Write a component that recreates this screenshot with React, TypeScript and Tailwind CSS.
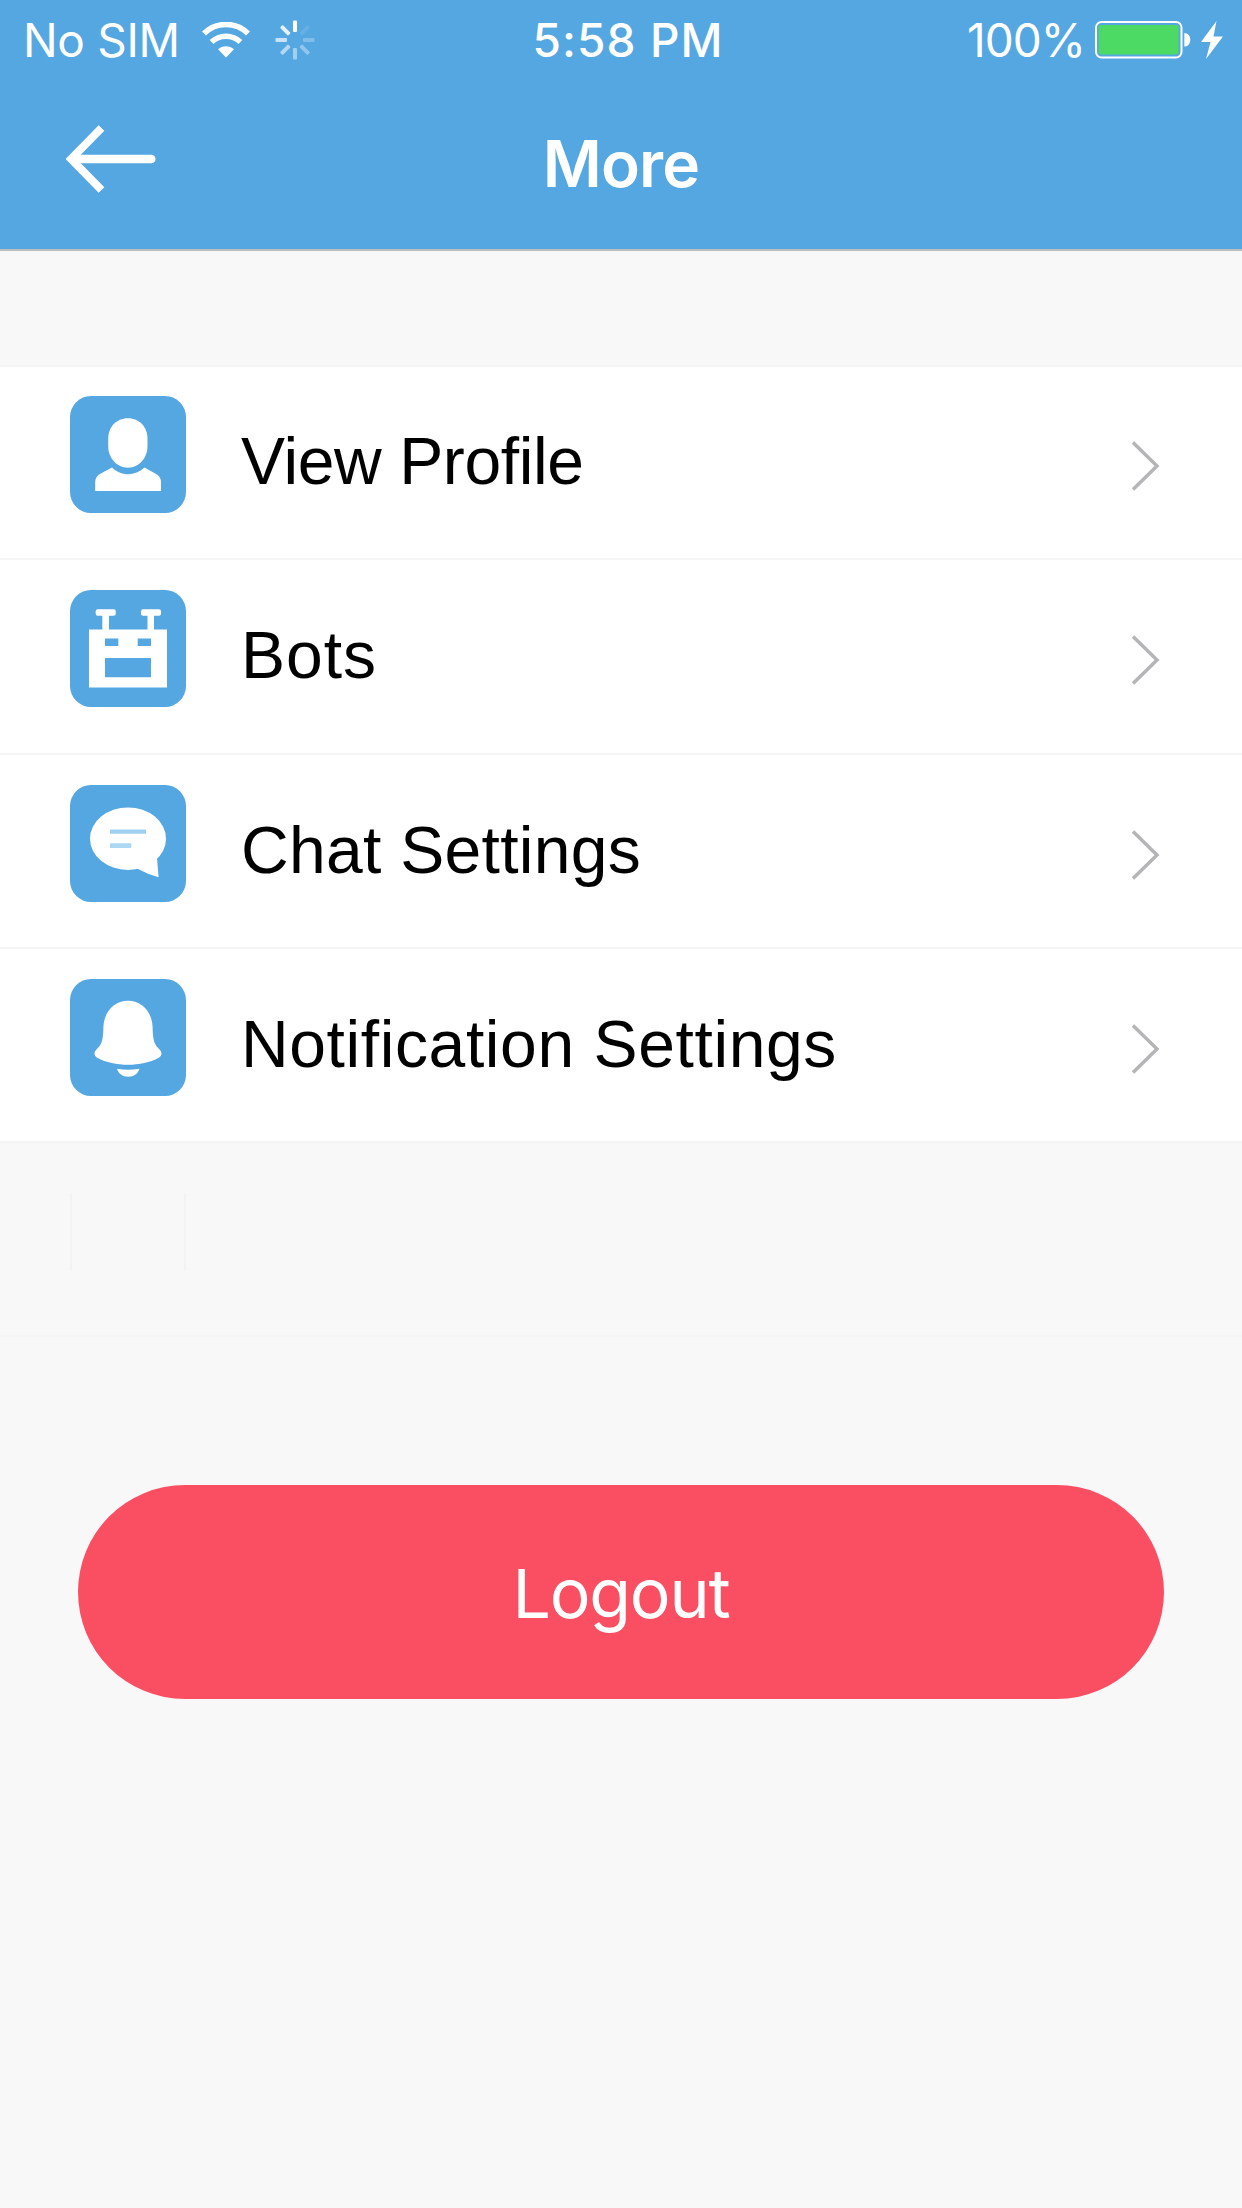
import type { ReactNode } from 'react'
import { clsx } from 'clsx'

const UI_FONT = "font-['Inter','Liberation_Sans',sans-serif]"
const LIST_FONT = "font-['Liberation_Sans',Arial,sans-serif]"

function WifiIcon() {
  return (
    <svg width="48" height="36" viewBox="0 0 48 36" fill="none" aria-hidden="true">
      <path d="M2 11.5C14 -0.6 34 -0.6 46 11.5" stroke="white" strokeWidth="5.5" />
      <path d="M9.6 20C17.5 12.2 30.5 12.2 38.4 20" stroke="white" strokeWidth="5.5" />
      <path d="M24 35.5L16 27.3C20.5 23.3 27.5 23.3 32 27.3Z" fill="white" />
    </svg>
  )
}

const spokes = [
  { angle: 0, opacity: 1 },
  { angle: 45, opacity: 0.1 },
  { angle: 90, opacity: 0.26 },
  { angle: 135, opacity: 0.36 },
  { angle: 180, opacity: 0.46 },
  { angle: 225, opacity: 0.56 },
  { angle: 270, opacity: 0.68 },
  { angle: 315, opacity: 0.85 },
]

function Spinner() {
  return (
    <svg width="40" height="40" viewBox="-20 -20 40 40" aria-hidden="true">
      {spokes.map((s) => (
        <rect
          key={s.angle}
          x="-2"
          y="-19.5"
          width="4"
          height="11.5"
          rx="1"
          fill="white"
          opacity={s.opacity}
          transform={`rotate(${s.angle})`}
        />
      ))}
    </svg>
  )
}

function BatteryIcon() {
  return (
    <svg width="96" height="38" viewBox="0 0 96 38" aria-hidden="true">
      <rect x="1" y="1" width="85.5" height="35.5" rx="5.5" fill="none" stroke="white" strokeWidth="2" />
      <rect x="3.7" y="4" width="80" height="29.5" rx="2.5" fill="#4cd964" />
      <path d="M89.3 12C93 12 95.3 15 95.3 18.8S93 25.6 89.3 25.6Z" fill="white" />
    </svg>
  )
}

function BoltIcon() {
  return (
    <svg width="22" height="38" viewBox="0 0 22 38" fill="white" aria-hidden="true">
      <path d="M15.5 0L0 21H9.5L5 38L22 15.5H12.5Z" />
    </svg>
  )
}

function StatusBar() {
  return (
    <div className={clsx('grid h-20 grid-cols-[1fr_auto_1fr] items-center text-[46px] leading-none', UI_FONT)}>
      <div className="flex items-center pl-[23px]">
        <span className="w-[179px] whitespace-nowrap font-normal tracking-[-0.3px]">No SIM</span>
        <WifiIcon />
        <span className="ml-[25px]"><Spinner /></span>
      </div>
      <span className="pl-[14px] font-medium tracking-[1.1px]">5:58 PM</span>
      <div className="flex items-center justify-end pr-[19px]">
        <span className="mr-[10px] font-normal tracking-[-1px]">100%</span>
        <BatteryIcon />
        <span className="ml-[10px]"><BoltIcon /></span>
      </div>
    </div>
  )
}

function NavBar() {
  return (
    <div className="grid h-[168px] grid-cols-[1fr_auto_1fr] items-center">
      <button className="ml-[66px] w-[91px] pb-[10px]" aria-label="Back">
        <svg width="91" height="70" viewBox="0 0 91 70" fill="none" stroke="white" aria-hidden="true">
          <path d="M35.5 4L5 35L35.5 66" strokeWidth="8" />
          <path d="M7 35H85.3" strokeWidth="8.5" strokeLinecap="round" />
        </svg>
      </button>
      <h1 className={clsx('text-[64px] font-semibold leading-none tracking-[-0.8px]', UI_FONT)}>More</h1>
    </div>
  )
}

function IconTile({ children }: { children: ReactNode }) {
  return (
    <svg width="116" height="117" viewBox="0 0 116 117" className="rounded-[21px] bg-[#55a7e2]" fill="white" aria-hidden="true">
      {children}
    </svg>
  )
}

const items = [
  {
    label: 'View Profile',
    spacing: 'tracking-[-0.4px]',
    icon: (
      <>
        <path d="M57.9 22.3C69.5 22.3 77.5 31 77.5 43V50C77.5 62 69 71.7 57.9 71.7S38.2 62 38.2 50V43C38.2 31 46.3 22.3 57.9 22.3Z" />
        <path d="M42 71.5C51 80.5 65 80.5 74.5 71.5L87 78.5Q91 81.5 91 86V95H25.2V86Q25.2 81.5 29 78.5Z" />
      </>
    ),
  },
  {
    label: 'Bots',
    spacing: 'tracking-[1px]',
    icon: (
      <>
        <rect x="25.7" y="19.3" width="20" height="6.5" rx="2" />
        <rect x="71" y="19.3" width="20" height="6.5" rx="2" />
        <path d="M32.3 24H39V41H32.3ZM77.5 24H84V41H77.5Z" />
        <path fillRule="evenodd" d="M19 39.5H97V97.5H19ZM35 48.5V56H48.3V48.5ZM67.7 48.5V56H81V48.5ZM35 68V87.3H81V68Z" />
      </>
    ),
  },
  {
    label: 'Chat Settings',
    spacing: 'tracking-[0.3px]',
    icon: (
      <>
        <ellipse cx="58" cy="53.7" rx="38" ry="31.3" />
        <path d="M87 73L88.6 92.3Q78 89.5 67 83.5Z" />
        <path d="M40 44.5H76V48.7H40Z" fill="#9fd0f0" />
        <path d="M40 58.3H61.3V63H40Z" fill="#add7f2" />
      </>
    ),
  },
  {
    label: 'Notification Settings',
    spacing: 'tracking-[0.6px]',
    icon: (
      <>
        <path d="M58 21.7C72 21.7 82 33 82.6 48C82.8 63 85 66 89.5 70.5C92.5 73.5 92 77 88.5 79C72 88 44 88 27.5 79C24 77 23.5 73.5 26.5 70.5C31 66 33.2 63 33.4 48C34 33 44 21.7 58 21.7Z" />
        <path d="M47 89.7C54 91 62 91 69.5 89.7C68 94.5 64 97.7 58.2 97.7S48.5 94.5 47 89.7Z" />
      </>
    ),
  },
]

function MenuRow({ label, icon, spacing }: (typeof items)[number]) {
  return (
    <li className="flex h-[194.3px] items-start border-b-2 border-[#f5f5f5] bg-white pl-[70px] pr-[82px] pt-[30px] first:h-[193.3px] first:pt-[29px]">
      <IconTile>{icon}</IconTile>
      <span className={clsx('ml-[55px] mt-[25px] flex-1 text-[66px] leading-[80px]', spacing, LIST_FONT)}>{label}</span>
      <svg width="29" height="50" viewBox="0 0 29 50" className="mt-[45px]" fill="none" stroke="#b5b5b8" strokeWidth="3.5" aria-hidden="true">
        <path d="M2 1.5L26 25L2 48.5" />
      </svg>
    </li>
  )
}

export default function App() {
  return (
    <div className="flex h-[2208px] w-[1242px] flex-col overflow-hidden bg-[#f8f8f8]">
      <header className="h-[251px] border-b-2 border-[#bcbfc0] bg-[#55a7e2] text-white">
        <StatusBar />
        <NavBar />
      </header>

      <ul className="mt-[114px] border-t-2 border-[#f5f5f5]">
        {items.map((item) => (
          <MenuRow key={item.label} {...item} />
        ))}
      </ul>

      {/* Empty trailing cell */}
      <div className="h-[194px] border-b-2 border-[#f5f5f5] pl-[70px] pt-[50px]">
        <div className="h-[78px] w-[116px] border-x-2 border-[#f3f3f3]" />
      </div>

      <button
        className={clsx(
          'mx-[78px] mt-[148px] h-[214px] rounded-full bg-[#fa4f62] pt-0.5 text-[68px] font-normal leading-none tracking-[-1.2px] text-white',
          UI_FONT
        )}
      >
        Logout
      </button>
    </div>
  )
}
